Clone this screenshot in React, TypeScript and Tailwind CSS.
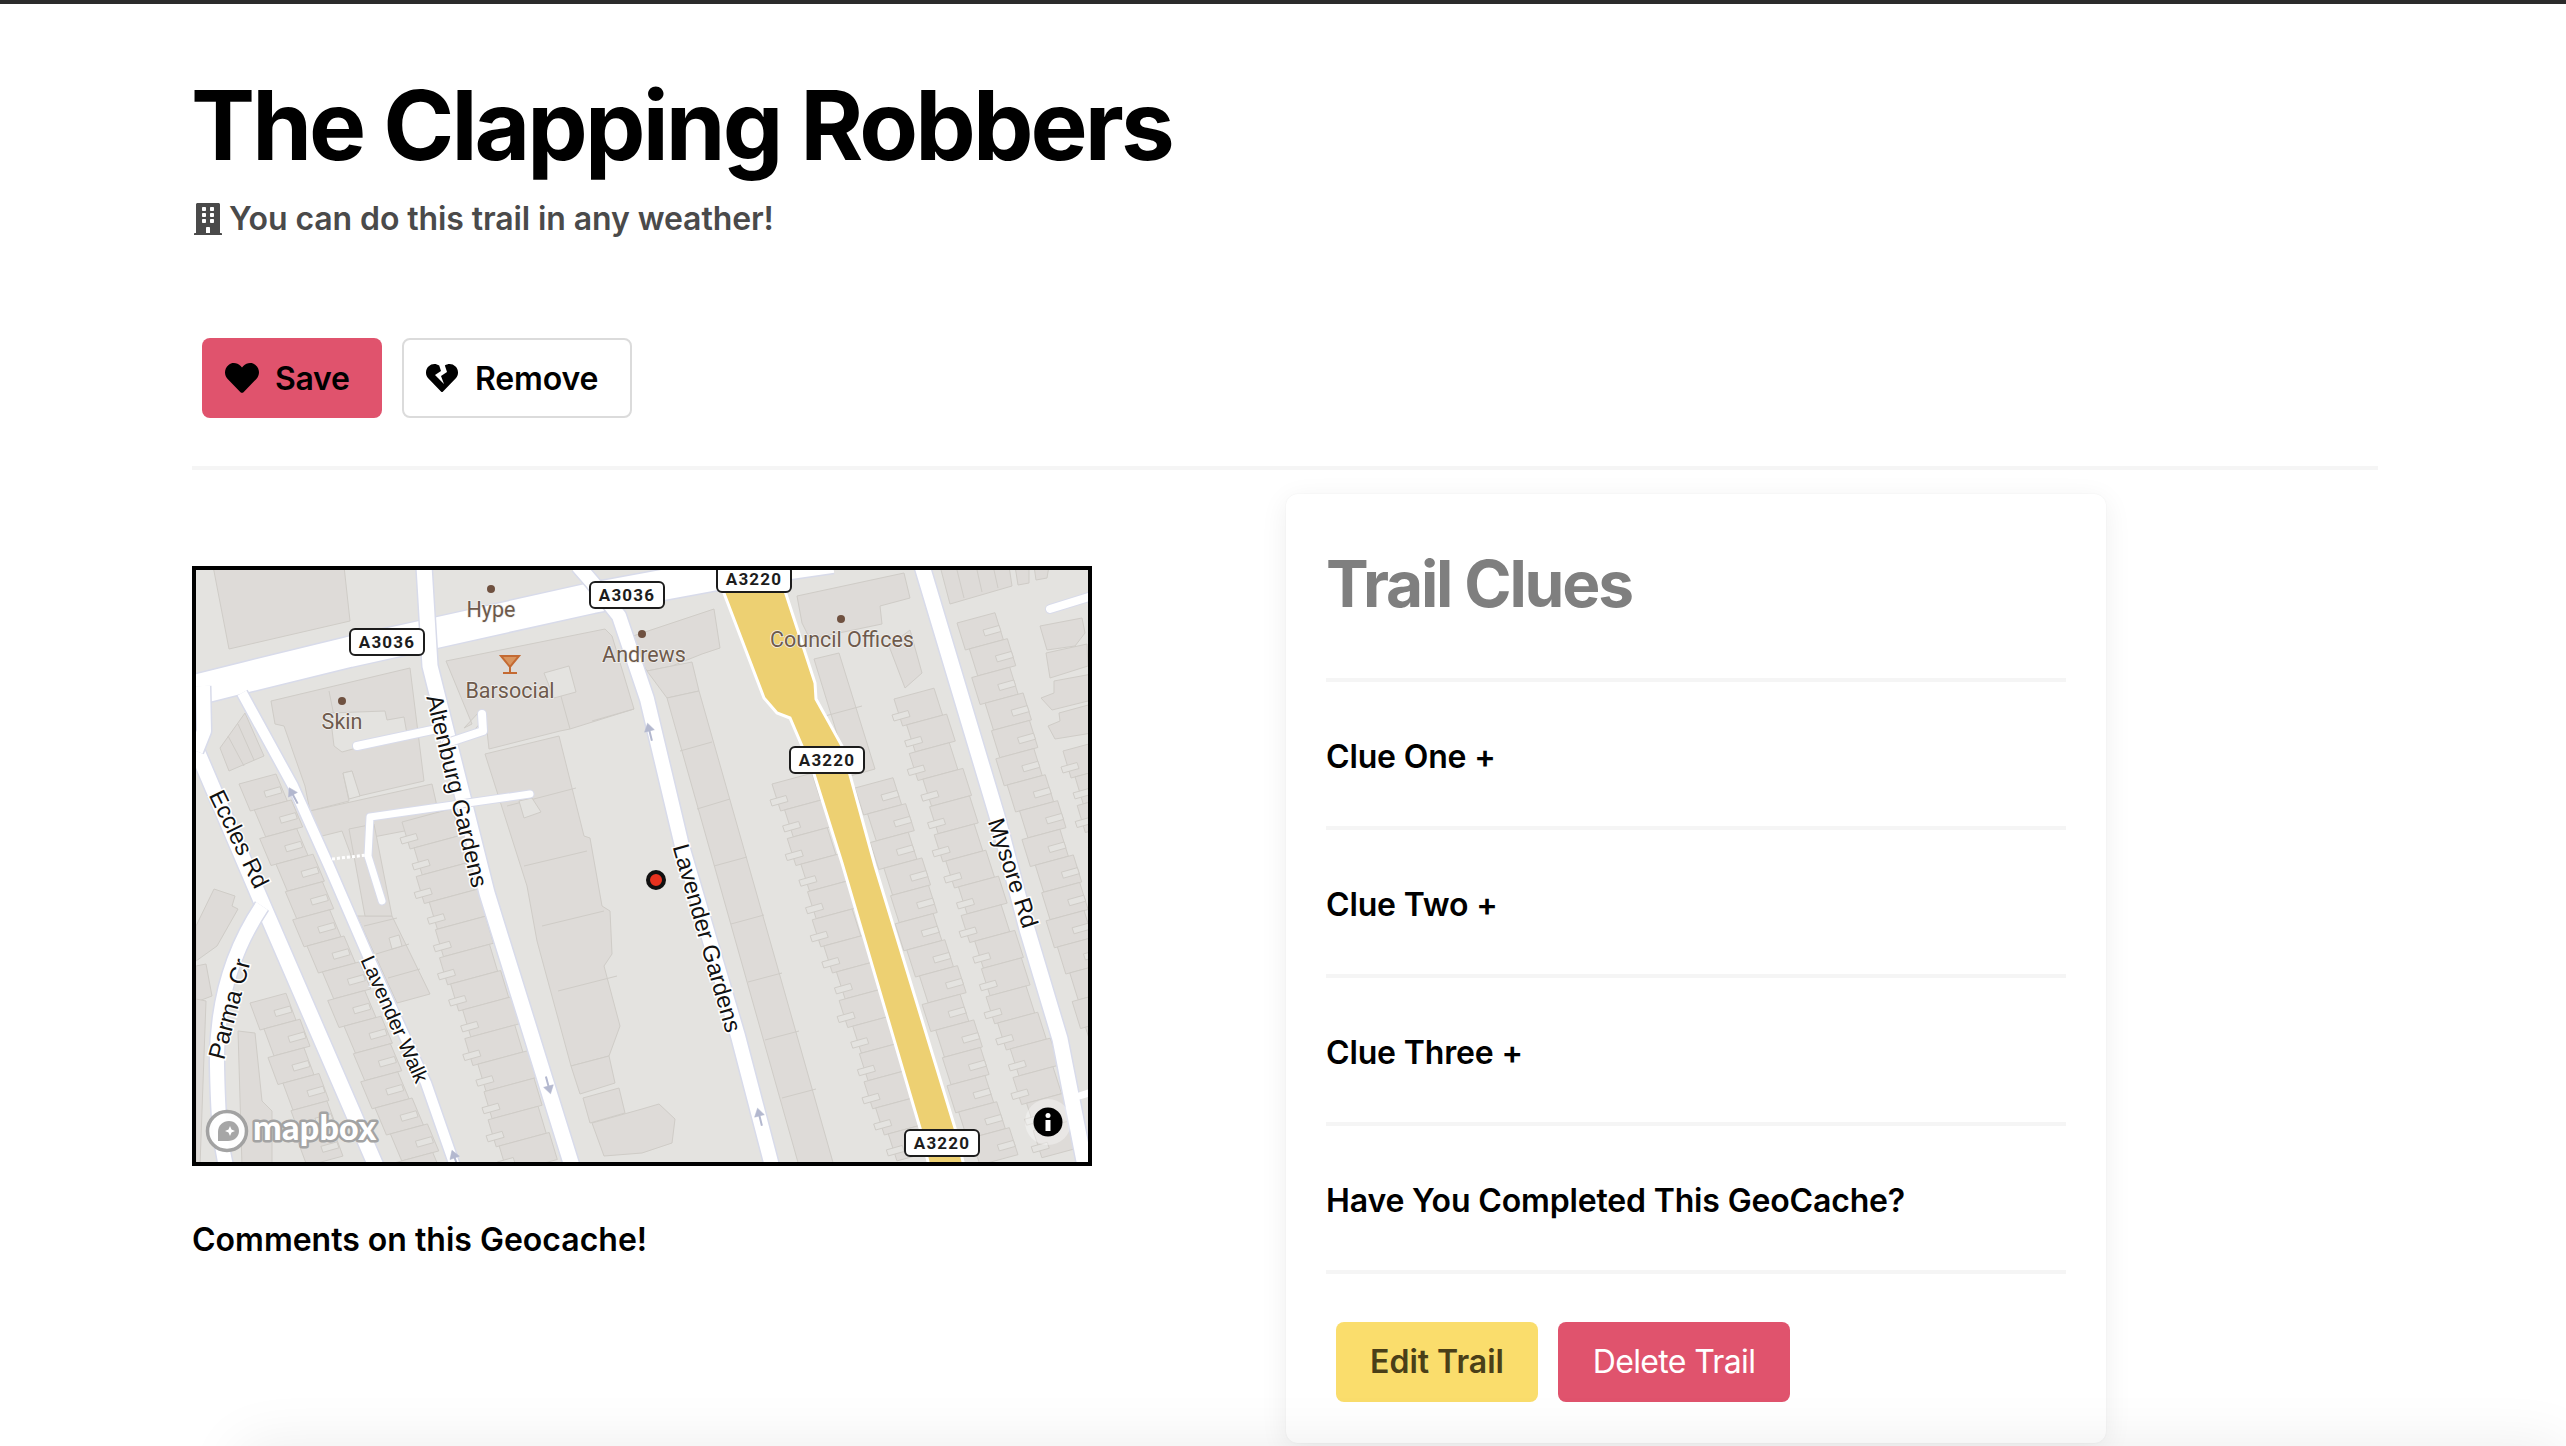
import React from 'react';
import { FaBuilding, FaHeart, FaHeartBroken } from 'react-icons/fa';

const LAND = '#e4e3e0';
const BLD = '#dedbd8';
const BLD_LINE = '#cfccc7';
const CASING = '#d8dbea';

type Pt = [number, number];

const pts = (list: Pt[]) => list.map((p) => p.join(',')).join(' ');

// a row of terraced houses stepping down the street
const Terrace: React.FC<{ x: number; y: number; w: number; n: number; step?: number; slope?: number; notch?: 'left' | 'right' }> = ({
  x,
  y,
  w,
  n,
  step = 27,
  slope = 0.31,
  notch = 'right',
}) => {
  const tilt = 0.27;
  const offs = [0, 4, -2, 3, 1, -3];
  return (
    <g stroke={BLD_LINE} strokeWidth="1">
      {Array.from({ length: n }).map((_, i) => {
        const o = offs[i % offs.length];
        const ox = x + slope * step * i + o;
        const oy = y + step * i - o * tilt;
        const dx = slope * step;
        const house: Pt[] = [
          [ox, oy],
          [ox + w, oy - w * tilt],
          [ox + w + dx, oy - w * tilt + step],
          [ox + dx, oy + step],
        ];
        const nx = notch === 'right' ? ox + w - 12 : ox - 2;
        const ny = notch === 'right' ? oy - (w - 12) * tilt + 14 : oy + 16;
        const tab: Pt[] = [
          [nx, ny],
          [nx + 16, ny - 4.5],
          [nx + 18, ny + 1.5],
          [nx + 2, ny + 6],
        ];
        return (
          <g key={i}>
            <polygon points={pts(house)} fill={BLD} />
            <polygon points={pts(tab)} fill={LAND} />
          </g>
        );
      })}
    </g>
  );
};

const Shield: React.FC<{ x: number; y: number; label: string }> = ({ x, y, label }) => (
  <g>
    <rect x={x} y={y} width="74" height="26" rx="5" fill="#fff" stroke="#1c1c1c" strokeWidth="2" />
    <text x={x + 37} y={y + 19} textAnchor="middle" fontFamily="Roboto, sans-serif" fontWeight="700" fontSize="17" letterSpacing="1.2" fill="#1c1c1c">
      {label}
    </text>
  </g>
);

const Poi: React.FC<{ x: number; y: number; label: string; lx?: number; ly: number; dot?: boolean }> = ({ x, y, label, lx, ly, dot = true }) => (
  <g>
    {dot && <circle cx={x} cy={y} r="4" fill="#6f5140" />}
    <text
      x={lx ?? x}
      y={ly}
      textAnchor="middle"
      fontFamily="Roboto, sans-serif"
      fontSize="21.5"
      fill="#6e5a4c"
      stroke="#f1f0ee"
      strokeWidth="1.5"
      paintOrder="stroke"
    >
      {label}
    </text>
  </g>
);

const Street: React.FC<{ x: number; y: number; angle: number; label: string; size?: number }> = ({ x, y, angle, label, size = 23.5 }) => (
  <text
    transform={`translate(${x} ${y}) rotate(${angle})`}
    textAnchor="middle"
    dominantBaseline="central"
    fontFamily="'Liberation Sans', sans-serif"
    fontSize={size}
    fill="#111"
    stroke="#fff"
    strokeWidth="3"
    paintOrder="stroke"
  >
    {label}
  </text>
);

const Road: React.FC<{ d: string; w: number }> = ({ d, w }) => (
  <g fill="none" strokeLinecap="butt" strokeLinejoin="round">
    <path d={d} stroke={CASING} strokeWidth={w + 3} />
    <path d={d} stroke="#fff" strokeWidth={w} />
  </g>
);

const Arrow: React.FC<{ x: number; y: number; angle: number }> = ({ x, y, angle }) => (
  <g transform={`translate(${x} ${y}) rotate(${angle})`} fill="#b3b8cf" stroke="#b3b8cf">
    <path d="M0 -6 L-5 2 L5 2 Z" strokeWidth="0.5" />
    <path d="M0 0 L0 12" strokeWidth="2" fill="none" />
  </g>
);

const TrailMap = () => (
  <svg viewBox="4 4 892 592" className="block w-full h-full">
    <rect x="0" y="0" width="900" height="600" fill={LAND} />

    {/* buildings */}
    <g fill={BLD} stroke={BLD_LINE} strokeWidth="1">
      <polygon points="21,0 152,0 158,55 37,83" />
      <polygon points="79,135 218,102 232,215 167,230 160,205 151,207 157,235 118,245 113,220 92,160 83,158" />
      <polygon points="118,245 240,218 249,258 176,272 178,285 160,292 150,265 122,272" />
      <polygon points="254,95 413,63 420,70 442,143 378,163 368,165 297,183 293,147 288,145 272,162 280,158" />
      <polygon points="293,188 367,170 392,270 398,272 410,340 418,345 420,388 412,400 428,460 417,490 379,500 345,375 335,320" />
      <polygon points="379,500 417,490 423,517 388,528" />
      <polygon points="391,532 427,522 433,547 398,557" />
      <polygon points="400,557 450,543 467,538 483,553 480,577 450,587 412,590" />
      <polygon points="165,350 200,350 238,428 205,437" />
      <polygon points="157,263 182,258 200,350 173,350" />
      <polygon points="435,72 522,43 528,82 510,88 480,100 455,105" />
      <polygon points="455,105 500,96 507,125 475,132" />
      <polygon points="475,132 507,125 642,600 607,600" />
      <polygon points="605,30 712,7 718,32 688,40 690,58 618,73 610,57" />
      <polygon points="622,93 647,87 683,203 658,210" />
      <polygon points="697,80 718,64 730,107 713,122" />
      <polygon points="748,0 817,0 820,20 758,38" />
      <polygon points="823,0 837,0 837,17 826,19" />
      <polygon points="842,0 857,0 855,12 844,14" />
      <polygon points="848,60 890,52 893,67 883,80 855,84" />
      <polygon points="854,87 895,78 896,100 858,112" />
      <polygon points="849,132 862,127 862,115 900,108 900,134 860,144" />
      <polygon points="856,160 868,155 867,147 900,138 900,167 863,173" />
      <polygon points="28,182 53,147 72,190 37,205" />
      <polygon points="22,323 43,330 40,340 46,343 25,380 4,395 4,360" />
      <polygon points="4,400 14,398 20,430 4,436" />
      <polygon points="46,465 63,467 70,535 80,545 80,600 50,600" />
      <polygon points="4,433 14,435 8,600 4,600" />
    </g>
    <g fill="none" stroke={BLD_LINE} strokeWidth="1">
      <path d="M137 125 L146 170 M272 175 L295 150 M362 105 L378 163 M442 143 L400 155" />
      <path d="M172 360 L205 352 M184 388 L217 378 M196 412 L228 403" />
      <path d="M488 185 L520 176 M505 243 L538 233 M522 300 L555 291 M539 358 L572 349 M556 416 L590 407 M573 474 L607 465 M590 532 L624 523" />
      <path d="M315 240 L384 222 M332 300 L395 285 M350 360 L412 345 M366 425 L425 410 M633 150 L670 140" />
      <path d="M765 4 L772 32 M785 4 L790 26 M802 4 L806 22 M36 170 L52 200 M46 158 L62 194" />
    </g>
    <g fill={LAND} stroke={BLD_LINE} strokeWidth="1">
      <polygon points="138,147 193,145 195,154 212,151 215,168 150,186 142,180" />
      <polygon points="352,107 377,100 384,126 362,132" />
      <polygon points="327,235 340,232 349,246 332,252" />
      <polygon points="197,372 207,369 210,380 200,383" />
      <polygon points="151,207 160,205 168,230 157,233" />
    </g>
    <Terrace x={47} y={218} w={37} n={15} slope={0.42} notch="right" />
    <Terrace x={210} y={256} w={50} n={13} slope={0.3} notch="left" />
    <Terrace x={58} y={437} w={36} n={6} slope={0.37} notch="right" />
    <Terrace x={580} y={218} w={40} n={14} slope={0.32} notch="left" />
    <Terrace x={663} y={222} w={38} n={14} slope={0.32} notch="right" />
    <Terrace x={702} y={133} w={40} n={17} slope={0.32} notch="left" />
    <Terrace x={765} y={57} w={38} n={21} slope={0.31} notch="right" />
    <Terrace x={871} y={185} w={40} n={15} slope={0.3} notch="left" />

    {/* roads */}
    <Road d="M-5 126 L55 111 L157 86 L243 67 L400 32 L530 8 L640 -8" w={30} />
    <Road d="M232 0 L238 100 L295 327 L380 600" w={15} />
    <Road d="M386 0 L400 16 L427 50 L455 133 L490 280 L546 470 L580 600" w={14} />
    <Road d="M-12 150 L5 185 L67 330 L184 600" w={15} />
    <Road d="M11 120 L12 165 L4 185" w={14} />
    <Road d="M50 127 L101 220 L137 300 L176 390 L234 517 L263 600" w={10} />
    <Road d="M70 340 C40 385 24 440 25 500 C26 550 28 575 34 600" w={14} />
    <Road d="M730 0 L805 250 L835 363 L868 473 L893 600" w={15} />
    <g fill="none" strokeLinecap="round" strokeLinejoin="round">
      <path d="M165 180 L245 163 M255 177 L291 165 L290 148" stroke={CASING} strokeWidth="10" />
      <path d="M165 180 L245 163 M255 177 L291 165 L290 148" stroke="#fff" strokeWidth="8" />
      <path d="M338 228 L178 251 L176 290 L190 335" stroke={CASING} strokeWidth="9" />
      <path d="M338 228 L178 251 L176 290 L190 335" stroke="#fff" strokeWidth="7" />
      <path d="M858 43 L900 30" stroke={CASING} strokeWidth="10" />
      <path d="M858 43 L900 30" stroke="#fff" strokeWidth="8" />
      <path d="M140 293 L175 289" stroke="#fff" strokeWidth="3" strokeDasharray="3 2" strokeLinecap="butt" />
      <path d="M884 531 L900 526" stroke="#fff" strokeWidth="7" strokeLinecap="butt" />
    </g>
    <polygon
      points="530,22 592,22 623,117 624,133 650,180 683,300 763,562 772,600 737,600 728,562 650,297 622,208 598,152 585,147 572,132"
      fill="#edd072"
      stroke="#fff"
      strokeWidth="3"
    />

    <Arrow x={100} y={227} angle={-28} />
    <Arrow x={457} y={163} angle={-14} />
    <Arrow x={357} y={522} angle={165} />
    <Arrow x={567} y={548} angle={-14} />
    <Arrow x={262} y={590} angle={-20} />

    {/* labels */}
    <Poi x={299} y={23} label="Hype" ly={51} />
    <Poi x={150} y={135} label="Skin" ly={163} />
    <Poi x={318} y={98} label="Barsocial" ly={132} dot={false} />
    <Poi x={450} y={68} label="Andrews" lx={452} ly={96} />
    <Poi x={649} y={53} label="Council Offices" lx={650} ly={81} />
    <g stroke="#c46a33" strokeWidth="2" fill="none">
      <path d="M309 90 L327 90 L318 101 Z" fill="#d9955f" />
      <path d="M318 101 L318 106 M311 107 L325 107" />
    </g>
    <Street x={265} y={225} angle={76.5} label="Altenburg Gardens" />
    <Street x={515} y={372} angle={74} label="Lavender Gardens" />
    <Street x={821} y={307} angle={72} label="Mysore Rd" />
    <Street x={47} y={273} angle={64} label="Eccles Rd" />
    <Street x={203} y={453} angle={66} label="Lavender Walk" size={20.6} />
    <Street x={37} y={443} angle={-75} label="Parma Cr" size={24} />

    <Shield x={158} y={63} label="A3036" />
    <Shield x={398} y={16} label="A3036" />
    <Shield x={525} y={0} label="A3220" />
    <Shield x={598} y={181} label="A3220" />
    <Shield x={713} y={564} label="A3220" />

    {/* pin */}
    <circle cx="464" cy="314" r="8" fill="#e8321f" stroke="#111" strokeWidth="4" />

    {/* attribution */}
    <circle cx="856" cy="556" r="23" fill="#fff" opacity="0.35" />
    <circle cx="856" cy="556" r="14.5" fill="#000" />
    <circle cx="856" cy="549.5" r="2.5" fill="#fff" />
    <rect x="853.5" y="554" width="5" height="11" fill="#fff" />

    <circle cx="35" cy="565" r="19.5" fill="#fff" stroke="#9f9f9f" strokeWidth="3.5" opacity="0.95" />
    <path d="M26 575 L26 566 C26 559 31 555 37 555 C43 555 47 560 47 565 C47 571 42 575 36 575 Z" fill="#a6a6a6" />
    <path d="M38 560 L39.5 563.5 L43 565 L39.5 566.5 L38 570 L36.5 566.5 L33 565 L36.5 563.5 Z" fill="#fff" />
    <text
      x="61"
      y="574"
      fontFamily="Lato, sans-serif"
      fontWeight="900"
      fontSize="34"
      letterSpacing="0.3"
      fill="#fff"
      stroke="#a3a3a3"
      strokeWidth="5"
      paintOrder="stroke"
      strokeLinejoin="round"
    >
      mapbox
    </text>
  </svg>
);

const clues = ['Clue One +', 'Clue Two +', 'Clue Three +', 'Have You Completed This GeoCache?'];

const App: React.FC = () => {
  return (
    <div className="relative h-[1446px] overflow-hidden bg-white border-t-4 border-[#2b2b2b] font-['Inter',sans-serif] text-black">
      <div className="ml-[192px] w-[2186px]">
        <div className="pt-[63px]">
          <h1 className="-ml-[1px] text-[96px] font-bold leading-[116px] tracking-[-0.03em]">The Clapping Robbers</h1>
          <p className="mt-[16px] flex items-center gap-[5px] text-[32px] font-semibold leading-[40px] tracking-[-0.003em] text-[#4a4a4a]">
            <FaBuilding className="text-[32px]" />
            <span>You can do this trail in any weather!</span>
          </p>
        </div>

        <div className="mt-[99px] pl-[10px] flex gap-[20px]">
          <button className="h-[80px] w-[180px] rounded-lg bg-[#e0536d] flex items-center pl-[23px] gap-[16px] text-[32px] font-semibold tracking-[-0.01em]">
            <FaHeart className="text-[34px]" />
            <span className="pt-[2px]">Save</span>
          </button>
          <button className="h-[80px] w-[230px] rounded-lg bg-white border-2 border-[#dbdbdb] flex items-center pl-[22px] gap-[17px] text-[32px] font-semibold tracking-[-0.005em]">
            <FaHeartBroken className="text-[32px]" />
            <span className="pt-[2px]">Remove</span>
          </button>
        </div>

        <div className="mt-[48px] h-[4px] bg-[#f5f5f5]" />

        <div className="flex mt-[24px]">
          <div className="w-[900px] pt-[72px]">
            <div className="h-[600px] w-[900px] border-4 border-black">
              <TrailMap />
            </div>
            <p className="mt-[50px] text-[32px] font-semibold leading-[48px]">Comments on this Geocache!</p>
          </div>

          <div className="ml-[194px] w-[820px] h-[949px] rounded-xl bg-white px-[40px] shadow-[0_6px_28px_rgba(0,0,0,0.07),0_0_2px_rgba(0,0,0,0.05)]">
            <h2 className="pt-[52px] h-[184px] text-[64px] font-bold leading-[76px] tracking-[-0.034em] text-[#7f7f7f]">Trail Clues</h2>
            {clues.map((c) => (
              <div key={c} className="border-t-4 border-[#f5f5f5] h-[148px] pt-[5px] flex items-center text-[32px] font-semibold tracking-[-0.005em]">
                {c}
              </div>
            ))}
            <div className="border-t-4 border-[#f5f5f5] pt-[48px] pl-[10px] flex gap-[20px]">
              <button className="h-[80px] w-[202px] rounded-lg bg-[#fadd6c] text-[32px] font-semibold text-[#4a3f18]">Edit Trail</button>
              <button className="h-[80px] w-[232px] rounded-lg bg-[#e0536d] text-[32px] tracking-[-0.02em] text-white">Delete Trail</button>
            </div>
          </div>
        </div>
      </div>
      {/* footer sits just under the fold, only its shadow shows */}
      <div className="absolute left-[240px] right-0 top-[1442px] h-[80px] rounded-xl shadow-[0_0_60px_rgba(0,0,0,0.08)]" />
    </div>
  );
};

export default App;
